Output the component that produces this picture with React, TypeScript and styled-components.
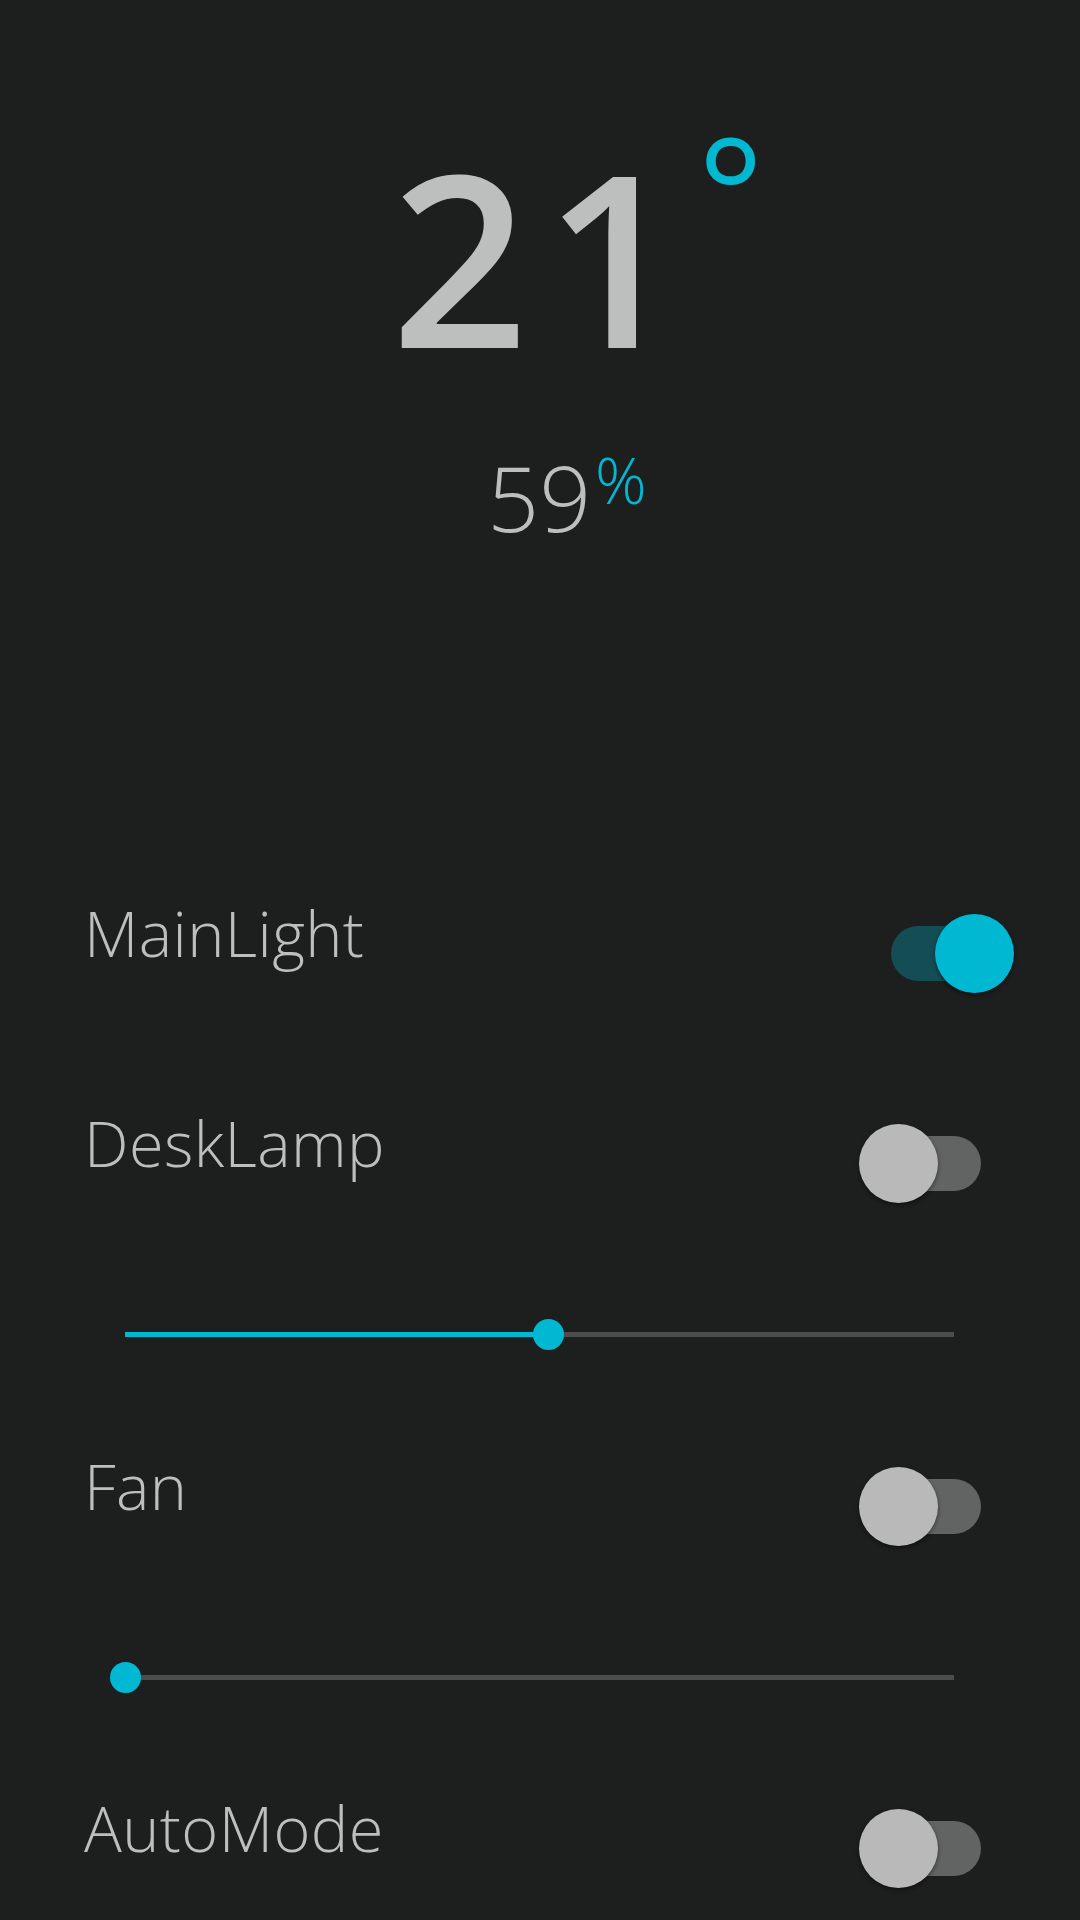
import React from "react"
import styled, { createGlobalStyle } from "styled-components"

const GlobalStyle = createGlobalStyle`
  html, body {
    margin: 0;
    padding: 0;
    background: #1d1f1e;
  }
  body {
    font-family: "Open Sans", "Noto Sans", sans-serif;
    color: #bdbfbe;
  }
`

const Page = styled.div`
  width: 1080px;
  min-height: 1920px;
  background: #1d1f1e;
  box-sizing: border-box;
  display: flex;
  flex-direction: column;
  overflow: hidden;
`

const Header = styled.header`
  display: flex;
  flex-direction: column;
  align-items: center;
  padding-top: 135px;
`

const TempRow = styled.div`
  display: flex;
  align-items: flex-start;
  padding-left: 75px;
`

const TempValue = styled.span`
  font-size: 240px;
  font-weight: 600;
  line-height: 1;
  letter-spacing: 16px;
  color: #bdbfbe;
`

const Degree = styled.span`
  font-size: 155px;
  font-weight: 500;
  line-height: 1;
  color: #00b8d2;
  margin-top: -23px;
`

const HumidityRow = styled.div`
  display: flex;
  align-items: flex-start;
  margin-top: 77px;
  padding-left: 54px;
`

const HumidityValue = styled.span`
  font-size: 91px;
  font-weight: 300;
  line-height: 1;
`

const Percent = styled.span`
  font-size: 64px;
  font-weight: 300;
  line-height: 1;
  color: #00b8d2;
  margin-top: -4px;
  margin-left: 4px;
`

const Controls = styled.section`
  display: flex;
  flex-direction: column;
  padding: 0 65px 0 84px;
`

const ToggleRow = styled.div<{ $top: number }>`
  display: flex;
  align-items: center;
  justify-content: space-between;
  height: 80px;
  margin-top: ${(p) => p.$top}px;
`

const Label = styled.span`
  font-size: 63px;
  font-weight: 350;
  line-height: 1;
  letter-spacing: 0.4px;
  margin-bottom: 43px;
  color: #bdbfbe;
`

const Switch = styled.div`
  position: relative;
  width: 156px;
  height: 80px;
  flex-shrink: 0;
`

const SwitchTrack = styled.div<{ $on: boolean }>`
  position: absolute;
  left: 32px;
  top: 12px;
  width: 90px;
  height: 55px;
  border-radius: 28px;
  background: ${(p) => (p.$on ? "#154d54" : "#626463")};
`

const SwitchThumb = styled.div<{ $on: boolean }>`
  position: absolute;
  top: 0;
  left: ${(p) => (p.$on ? 76 : 0)}px;
  width: 79px;
  height: 79px;
  border-radius: 50%;
  background: ${(p) => (p.$on ? "#00b8d2" : "#b9b9b9")};
  box-shadow: 0 2px 4px rgba(0, 0, 0, 0.45);
`

const SliderRow = styled.div<{ $top: number }>`
  position: relative;
  height: 31px;
  margin: ${(p) => p.$top}px 61px 0 41px;
`

const SliderTrack = styled.div`
  position: absolute;
  left: 0;
  right: 0;
  top: 13px;
  height: 5px;
  background: #4b4c4b;
`

const SliderFill = styled.div`
  position: absolute;
  left: 0;
  top: 13px;
  height: 5px;
  background: #00b8d2;
`

const SliderThumb = styled.div`
  position: absolute;
  top: 0;
  width: 31px;
  height: 31px;
  margin-left: -15px;
  border-radius: 50%;
  background: #00b8d2;
`

const Toggle = ({ label, on, top }: { label: string; on: boolean; top: number }) => (
  <ToggleRow $top={top}>
    <Label>{label}</Label>
    <Switch>
      <SwitchTrack $on={on} />
      <SwitchThumb $on={on} />
    </Switch>
  </ToggleRow>
)

const Slider = ({ value, top }: { value: number; top: number }) => (
  <SliderRow $top={top}>
    <SliderTrack />
    <SliderFill style={{ width: `${value}%` }} />
    <SliderThumb style={{ left: `${value}%` }} />
  </SliderRow>
)

const App = () => {
  return (
    <Page>
      <GlobalStyle />
      <Header>
        <TempRow>
          <TempValue>21</TempValue>
          <Degree>°</Degree>
        </TempRow>
        <HumidityRow>
          <HumidityValue>59</HumidityValue>
          <Percent>%</Percent>
        </HumidityRow>
      </Header>
      <Controls>
        <Toggle label="MainLight" on top={371} />
        <Toggle label="DeskLamp" on={false} top={130} />
        <Slider value={51} top={115} />
        <Toggle label="Fan" on={false} top={117} />
        <Slider value={0} top={115} />
        <Toggle label="AutoMode" on={false} top={116} />
      </Controls>
    </Page>
  )
}

export default App
